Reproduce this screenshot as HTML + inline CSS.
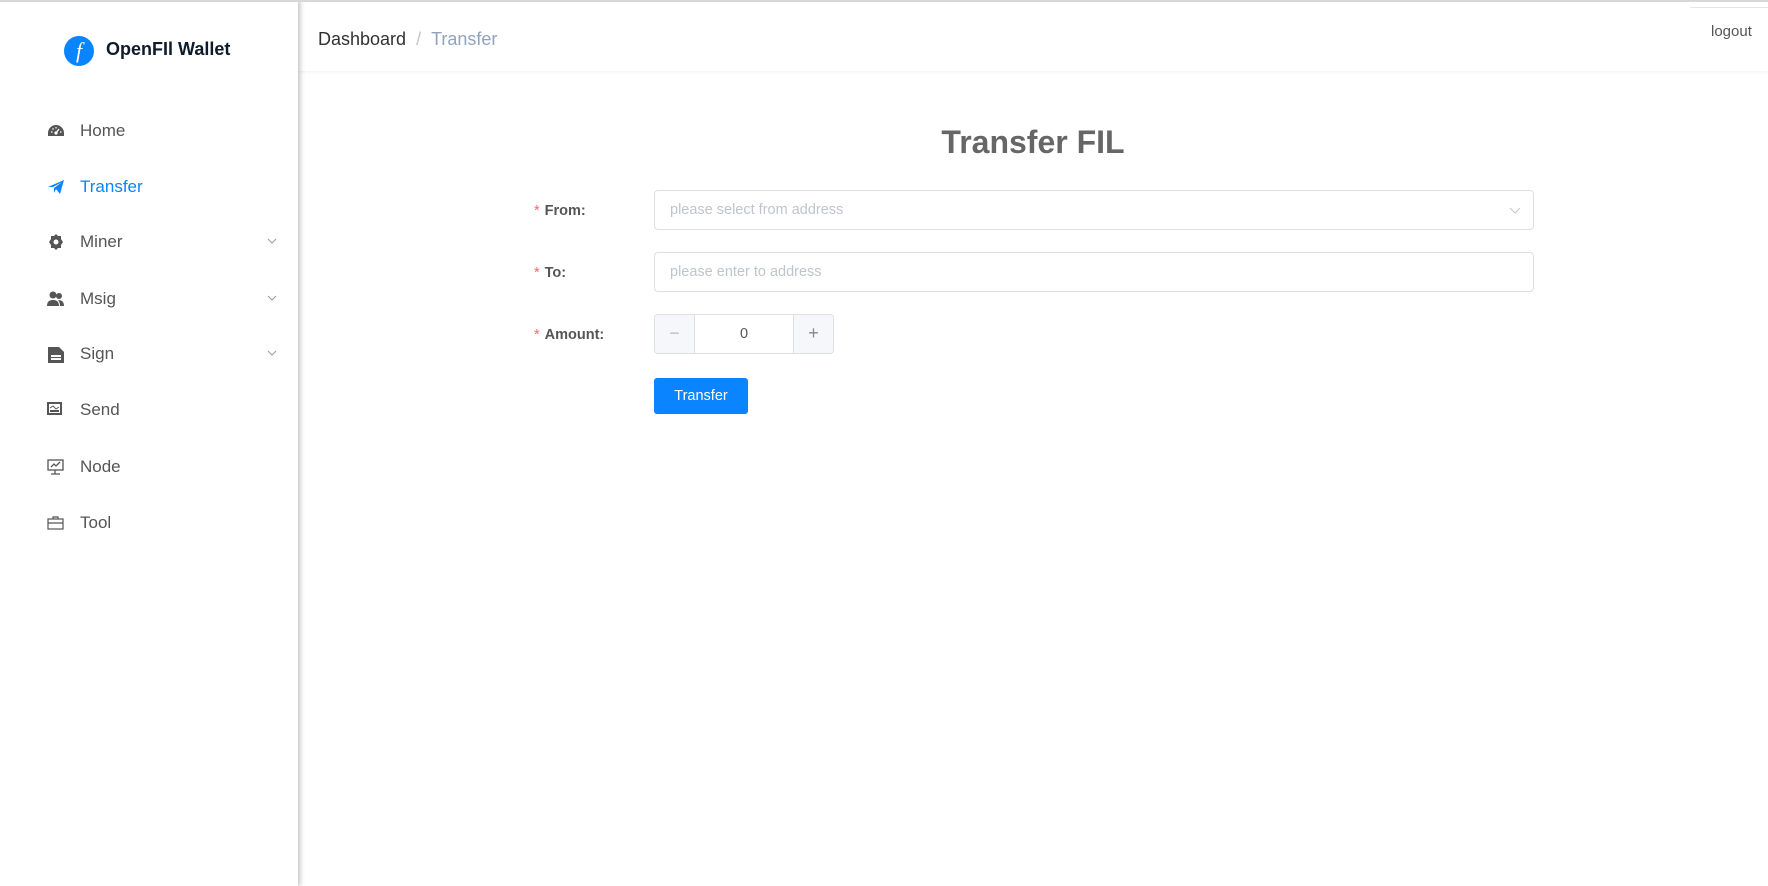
<!DOCTYPE html>
<html><head><meta charset="utf-8"><style>
*{box-sizing:border-box;margin:0;padding:0}
body{width:1768px;height:886px;overflow:hidden;background:#fff;font-family:"Liberation Sans",sans-serif;position:relative}
.topline{position:absolute;left:0;top:0;width:1768px;height:2px;background:#d8d8d8;z-index:5}
.side{position:absolute;left:0;top:0;width:298px;height:886px;background:#fff;box-shadow:2px 0 5px rgba(0,0,0,.25);z-index:3}
.logo{position:absolute;left:64px;top:36px;width:30px;height:30px;border-radius:50%;background:#0a84ff;color:#fff;font:italic 22px "Liberation Serif",serif;text-align:center;line-height:30px}
.brand{position:absolute;left:106px;top:39px;font-weight:bold;font-size:18px;color:#0d1b2a}
.item{position:absolute;left:0;width:298px;height:30px;font-size:17px;color:#555;line-height:30px}
.item .t{position:absolute;left:80px}
.item svg{position:absolute;left:47px;top:7px}
.item .ch{position:absolute;left:266px;top:8px}
.hdr{position:absolute;left:298px;top:0;width:1470px;height:71px;box-shadow:0 1px 3px rgba(0,0,0,.06)}
.bc{position:absolute;left:20px;top:29px;font-size:18px;color:#303133}
.bc .s{color:#c0c4cc;margin:0 10px}
.bc .c{color:#8fa3bf}
.logout{position:absolute;left:1413px;top:23px;font-size:15px;color:#555}
.ll{position:absolute;left:1392px;top:7px;width:78px;height:1px;background:#e4e6ec}
h1{position:absolute;left:298px;width:1470px;top:124px;text-align:center;font-size:32px;color:#666;font-weight:bold}
.lab{position:absolute;left:534px;font-size:14.5px;font-weight:bold;color:#555}
.lab b{color:#f56c6c;font-weight:normal;margin-right:5px}
.inp{position:absolute;left:654px;width:880px;height:40px;border:1px solid #dcdfe6;border-radius:4px;font-size:14.5px;color:#c0c4cc;padding-left:15px;line-height:38px}
.num{position:absolute;left:654px;top:314px;width:180px;height:40px;border:1px solid #dcdfe6;border-radius:4px;overflow:hidden}
.num .b{position:absolute;top:0;width:40px;height:38px;background:#f5f7fa;color:#888;text-align:center;line-height:36px;font-size:18px}
.btn{position:absolute;left:654px;top:378px;width:94px;height:36px;background:#0a84ff;border-radius:3px;color:#fff;font-size:14.5px;text-align:center;line-height:36px}
</style></head><body>
<div class="topline"></div>
<div class="side">
<div class="logo">f</div><div class="brand">OpenFIl Wallet</div>
<div class="item" style="top:116px"><svg width="18" height="16" viewBox="0 0 18 16"><path d="M9 2a8 8 0 0 0-8 8v3h16v-3a8 8 0 0 0-8-8z" fill="#555"/><circle cx="9" cy="10" r="1.6" fill="#fff"/><path d="M9 10l3-4M4 9h1.5M13 9h1.5M5.5 5.5l1 1M9 4v1.5" stroke="#fff" stroke-width="1.3"/></svg><span class="t">Home</span></div>
<div class="item" style="top:172px;color:#0a84ff"><svg width="18" height="16" viewBox="0 0 18 16"><path d="M1 8L17 1l-4 14-4-5-2 4V9l8-6-9 5z" fill="#0a84ff"/></svg><span class="t">Transfer</span></div>
<div class="item" style="top:227px"><svg width="18" height="16" viewBox="0 0 18 16"><path d="M9 0l2 2h3v3l2 3-2 3v3h-3l-2 2-2-2H4v-3L2 8l2-3V2h3z" fill="#555"/><circle cx="9" cy="8" r="2.5" fill="#fff"/></svg><span class="t">Miner</span><svg class="ch" width="12" height="12" viewBox="0 0 12 12"><path d="M2 4l4 4 4-4" stroke="#999" fill="none"/></svg></div>
<div class="item" style="top:284px"><svg width="18" height="16" viewBox="0 0 18 16"><circle cx="6" cy="4" r="3.5" fill="#555"/><path d="M0 15c0-5 3-6 6-6s6 1 6 6z" fill="#555"/><circle cx="12" cy="5" r="3" fill="#555"/><path d="M13 15c0-3-1-5-2-6 3 0 6 1 6 6z" fill="#555"/></svg><span class="t">Msig</span><svg class="ch" width="12" height="12" viewBox="0 0 12 12"><path d="M2 4l4 4 4-4" stroke="#999" fill="none"/></svg></div>
<div class="item" style="top:339px"><svg width="18" height="18" viewBox="0 0 18 18"><path d="M1 1h11l5 5v11H1z" fill="#555"/><rect x="4" y="9" width="10" height="2" fill="#fff"/><rect x="4" y="12" width="10" height="2" fill="#fff"/></svg><span class="t">Sign</span><svg class="ch" width="12" height="12" viewBox="0 0 12 12"><path d="M2 4l4 4 4-4" stroke="#999" fill="none"/></svg></div>
<div class="item" style="top:395px"><svg width="16" height="14" viewBox="0 0 16 14"><rect x="1" y="1" width="13" height="11" fill="none" stroke="#555" stroke-width="2"/><path d="M3 6l3-2 3 3 3-2" stroke="#555" fill="none"/><rect x="3" y="8" width="9" height="2" fill="#555"/></svg><span class="t">Send</span></div>
<div class="item" style="top:452px"><svg width="18" height="17" viewBox="0 0 18 17"><rect x="1" y="1" width="15" height="10" fill="none" stroke="#555" stroke-width="1.3"/><path d="M4 8l3-3 2 2 4-4M8 11v4M4 15h9" stroke="#555" fill="none" stroke-width="1.3"/></svg><span class="t">Node</span></div>
<div class="item" style="top:508px"><svg width="18" height="16" viewBox="0 0 18 16"><rect x="1" y="4" width="15" height="10" fill="none" stroke="#555" stroke-width="1.2"/><path d="M6 4V2h5v2M1 8h15" stroke="#555" fill="none" stroke-width="1.2"/></svg><span class="t">Tool</span></div>
</div>
<div class="hdr"><div class="bc">Dashboard<span class="s">/</span><span class="c">Transfer</span></div><div class="ll"></div><div class="logout">logout</div></div>
<h1>Transfer FIL</h1>
<div class="lab" style="top:203px"><b>*</b>From:</div>
<div class="inp" style="top:190px">please select from address<svg style="position:absolute;right:12px;top:14px" width="12" height="10" viewBox="0 0 12 10"><path d="M1 3l5 5 5-5" stroke="#c0c4cc" fill="none"/></svg></div>
<div class="lab" style="top:265px"><b>*</b>To:</div>
<div class="inp" style="top:252px">please enter to address</div>
<div class="lab" style="top:327px"><b>*</b>Amount:</div>
<div class="num"><div class="b" style="left:0;border-right:1px solid #dcdfe6;color:#bbb">−</div><div style="position:absolute;left:40px;width:98px;text-align:center;line-height:38px;font-size:14.5px;color:#555">0</div><div class="b" style="right:0;border-left:1px solid #dcdfe6">+</div></div>
<div class="btn">Transfer</div>
</body></html>
